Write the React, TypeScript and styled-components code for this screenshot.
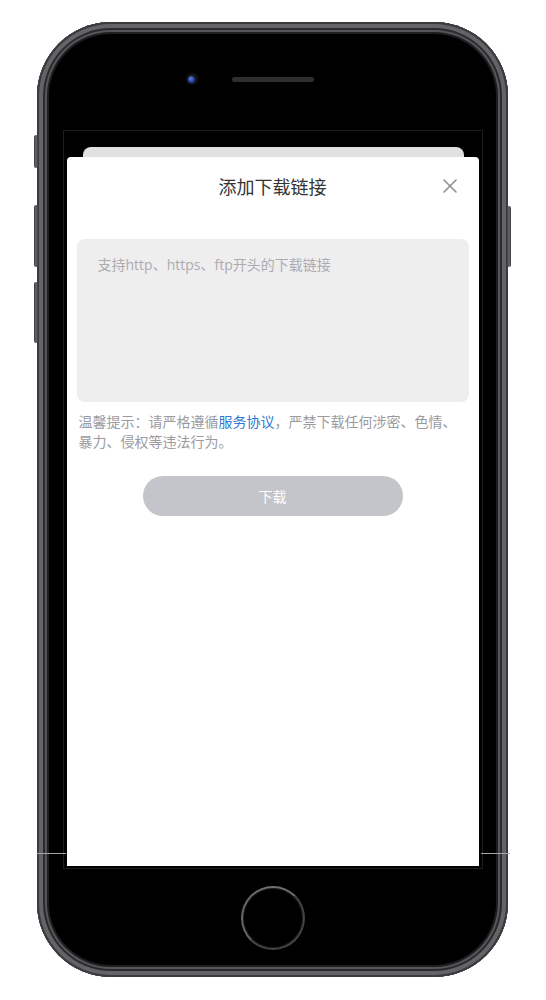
import { createGlobalStyle, styled } from "styled-components"

const GlobalStyle = createGlobalStyle`
  html, body {
    margin: 0;
    padding: 0;
    background: #ffffff;
  }
  body {
    font-family: "Open Sans", "Noto Sans CJK SC", sans-serif;
    text-spacing-trim: space-all;
  }
  * {
    box-sizing: border-box;
  }
`

export default function App() {
  return (
    <>
      <GlobalStyle />
      <Page>
        <Phone>
          <SideKey $side="left" $top={113} $height={33} />
          <SideKey $side="left" $top={183} $height={62} />
          <SideKey $side="left" $top={260} $height={61} />
          <SideKey $side="right" $top={184} $height={61} />
          <EdgeLine $side="left" />
          <EdgeLine $side="right" />

          <TopBezel>
            <Camera />
            <Speaker />
            <span />
          </TopBezel>

          <Screen>
            <BackCard />
            <Sheet>
              <Header>
                <span />
                <Title>添加下载链接</Title>
                <CloseButton aria-label="关闭">
                  <svg width="14" height="14" viewBox="0 0 14 14">
                    <path
                      d="M1 1 L13 13 M13 1 L1 13"
                      stroke="#8e8e93"
                      strokeWidth="1.6"
                      strokeLinecap="round"
                    />
                  </svg>
                </CloseButton>
              </Header>
              <Body>
                <LinkInput placeholder="支持http、https、ftp开头的下载链接" />
                <Notice>
                  温馨提示：请严格遵循<NoticeLink>服务协议</NoticeLink>，严禁下载任何涉密、色情、暴力、侵权等违法行为。
                </Notice>
                <DownloadButton>下载</DownloadButton>
              </Body>
            </Sheet>
          </Screen>

          <BottomBezel>
            <HomeButton />
          </BottomBezel>
        </Phone>
      </Page>
    </>
  )
}

const Page = styled.div`
  padding: 22px 0 0 37px;
`
const Phone = styled.div`
  position: relative;
  width: 471px;
  height: 955px;
  border-radius: 74px;
  background: #000;
  display: flex;
  flex-direction: column;
  align-items: center;
  box-shadow:
    inset 0 0 0 2px #3b3b3e,
    inset 0 0 0 6px #646468,
    inset 0 0 0 8px #2b2b2d,
    inset 0 0 0 10px #56565a,
    inset 0 0 0 12px #1e1e20;
`
const SideKey = styled.div<{ $side: "left" | "right"; $top: number; $height: number }>`
  position: absolute;
  top: ${(p) => p.$top}px;
  ${(p) => (p.$side === "left" ? "left: -3px;" : "right: -3px;")}
  width: 4px;
  height: ${(p) => p.$height}px;
  border-radius: 2px;
  background: linear-gradient(90deg, #3a3a3d, #6a6a6e, #3a3a3d);
`
const EdgeLine = styled.div<{ $side: "left" | "right" }>`
  position: absolute;
  top: 831px;
  ${(p) => (p.$side === "left" ? "left: 0;" : "right: -2px;")}
  width: 29px;
  height: 1px;
  background: #a5a5a8;
`
const TopBezel = styled.div`
  width: 100%;
  height: 108px;
  padding-top: 51px;
  display: grid;
  grid-template-columns: 1fr 82px 1fr;
  align-items: start;
`
const Camera = styled.div`
  justify-self: end;
  margin-right: 34px;
  width: 12px;
  height: 12px;
  border-radius: 50%;
  background: #141417;
  display: flex;
  align-items: center;
  justify-content: center;

  &::after {
    content: "";
    width: 7px;
    height: 7px;
    border-radius: 50%;
    background: radial-gradient(circle at 40% 40%, #5b7de0, #233a96 60%, #141c4a);
  }
`
const Speaker = styled.div`
  margin-top: 4px;
  width: 82px;
  height: 5px;
  border-radius: 3px;
  background: #2f2f32;
`
const Screen = styled.div`
  width: 420px;
  height: 739px;
  border: 1px solid #1e1e20;
  background: #000;
  padding: 16px 3px 2px;
  display: flex;
  flex-direction: column;
`
const BackCard = styled.div`
  margin: 0 15px 0 16px;
  height: 10px;
  border-radius: 8px 8px 0 0;
  background: #e1e1e1;
`
const Sheet = styled.div`
  flex: 1;
  background: #fff;
  border-radius: 4px 4px 0 0;
  display: flex;
  flex-direction: column;
`
const Header = styled.div`
  height: 58px;
  display: grid;
  grid-template-columns: 1fr auto 1fr;
  align-items: center;
`
const Title = styled.div`
  font-family: "Noto Sans CJK SC", sans-serif;
  font-size: 18px;
  color: #333;
  line-height: 24px;
`
const CloseButton = styled.button`
  justify-self: end;
  margin-right: 22px;
  padding: 0;
  border: none;
  background: none;
  width: 14px;
  height: 14px;
  display: flex;
`
const Body = styled.div`
  padding: 24px 10px 0;
  display: flex;
  flex-direction: column;
`
const LinkInput = styled.textarea`
  height: 163px;
  border: none;
  outline: none;
  resize: none;
  border-radius: 8px;
  background: #eeeeef;
  padding: 16px 21px;
  font-family: inherit;
  font-size: 14px;
  line-height: 20px;
  color: #333;

  &::placeholder {
    color: #acacb0;
  }
`
const Notice = styled.p`
  margin: 9px 0 0 2px;
  font-family: "Noto Sans CJK SC", sans-serif;
  font-size: 14px;
  line-height: 20px;
  color: #9b9b9f;
`
const NoticeLink = styled.span`
  color: #2d7bd6;
`
const DownloadButton = styled.button`
  align-self: center;
  margin-top: 25px;
  width: 260px;
  height: 40px;
  border: none;
  border-radius: 20px;
  background: #c4c5ca;
  color: #fff;
  font-family: "Noto Sans CJK SC", sans-serif;
  font-size: 14px;
`
const BottomBezel = styled.div`
  flex: 1;
  padding-bottom: 10px;
  display: flex;
  align-items: center;
  justify-content: center;
`
const HomeButton = styled.div`
  width: 64px;
  height: 64px;
  border-radius: 50%;
  border: 2.5px solid #444448;
  border-top-color: #6e6e72;
  border-left-color: #66666a;
  box-shadow: inset 0 0 0 1px #1a1a1c;
`
